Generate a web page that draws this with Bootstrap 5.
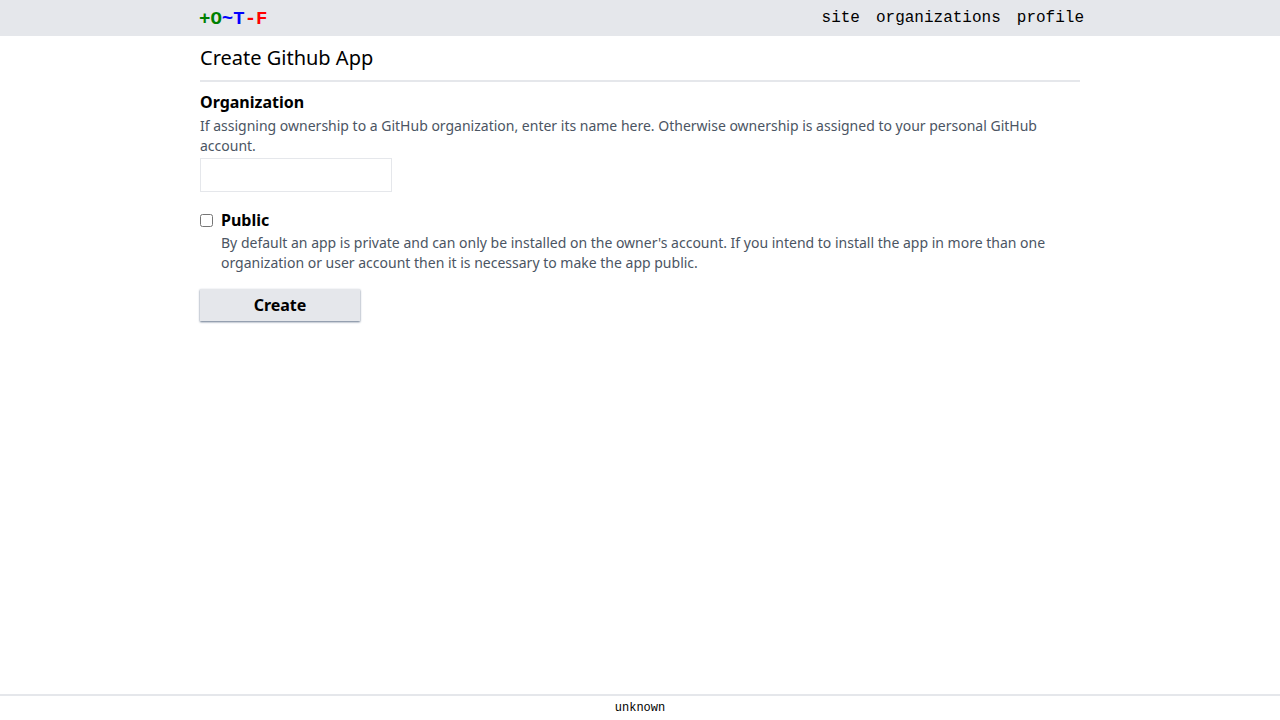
<!DOCTYPE html>
<html lang="en">
<head>
<meta charset="utf-8">
<meta name="viewport" content="width=device-width, initial-scale=1">
<title>Create Github App</title>
<link href="https://cdn.jsdelivr.net/npm/bootstrap@5.3.0/dist/css/bootstrap.min.css" rel="stylesheet">
<style>
body { font-family: "Noto Sans", sans-serif; font-size: 16px; line-height: 24px; color: #000; }
.site-bar { background: #e5e7eb; padding: 6px 0 4px; }
.page-width { width: 100%; max-width: 912px; margin: 0 auto; padding: 0 16px; }
.site-bar .page-width { padding: 0 12px 0 15px; }
.site-bar, .site-footer { font-family: "Liberation Mono", monospace; }
.site-bar a { color: #000; text-decoration: none; }
.site-bar .brand { font-size: 19px; line-height: 26px; font-weight: 700; }
.brand .plus { color: #008000; }
.brand .tilde { color: #00f; }
.brand .minus { color: #f00; }
.page-title { font-size: 20px; line-height: 28px; font-weight: 400; padding-bottom: 8px; border-bottom: 2px solid #e5e7eb; }
.hint { font-size: 14px; line-height: 20px; color: #4b5563; }
.field-label, .create-btn { font-weight: 700; }
.org-field .hint { padding: 2px 0; }
.org-input { width: 192px; height: 34px; border: 1px solid #e5e7eb; padding: 4px 8px; }
.public-field { display: grid; grid-template-columns: 13px 1fr; column-gap: 8px; row-gap: 1px; align-items: center; }
.public-field .hint { grid-column: 2; }
.public-box { width: 13px; height: 13px; margin: 0; }
.create-btn { width: 160px; height: 32px; padding: 4px; border: 0; border-radius: 0; background: #e5e7eb; color: #000; box-shadow: 0 1px 2px 0 #64748b; }
.site-footer { border-top: 2px solid #e5e7eb; font-size: 12px; line-height: 16px; padding: 4px; }
</style>
</head>
<body class="d-flex flex-column min-vh-100">
<header class="site-bar">
  <div class="page-width d-flex justify-content-between align-items-start">
    <a class="brand" href="#"><span class="plus">+O</span><span class="tilde">~T</span><span class="minus">-F</span></a>
    <nav class="d-flex gap-3" aria-label="Main">
      <a href="#">site</a><a href="#">organizations</a><a href="#">profile</a>
    </nav>
  </div>
</header>
<main class="page-width flex-grow-1 pt-2">
  <h1 class="page-title mb-2">Create Github App</h1>
  <form class="d-flex flex-column align-items-start gap-3">
    <div class="org-field d-flex flex-column align-items-start">
      <label class="field-label" for="organization">Organization</label>
      <span class="hint" id="organization-hint">If assigning ownership to a GitHub organization, enter its name here. Otherwise ownership is assigned to your personal GitHub account.</span>
      <input class="org-input" type="text" id="organization" aria-describedby="organization-hint">
    </div>
    <div class="public-field">
      <input class="public-box" type="checkbox" id="public" aria-describedby="public-hint">
      <label class="field-label" for="public">Public</label>
      <div class="hint" id="public-hint">By default an app is private and can only be installed on the owner's account. If you intend to install the app in more than one organization or user account then it is necessary to make the app public.</div>
    </div>
    <button class="create-btn btn" type="button">Create</button>
  </form>
</main>
<footer class="site-footer text-center">unknown</footer>
<script src="https://cdn.jsdelivr.net/npm/bootstrap@5.3.0/dist/js/bootstrap.bundle.min.js"></script>
</body>
</html>
